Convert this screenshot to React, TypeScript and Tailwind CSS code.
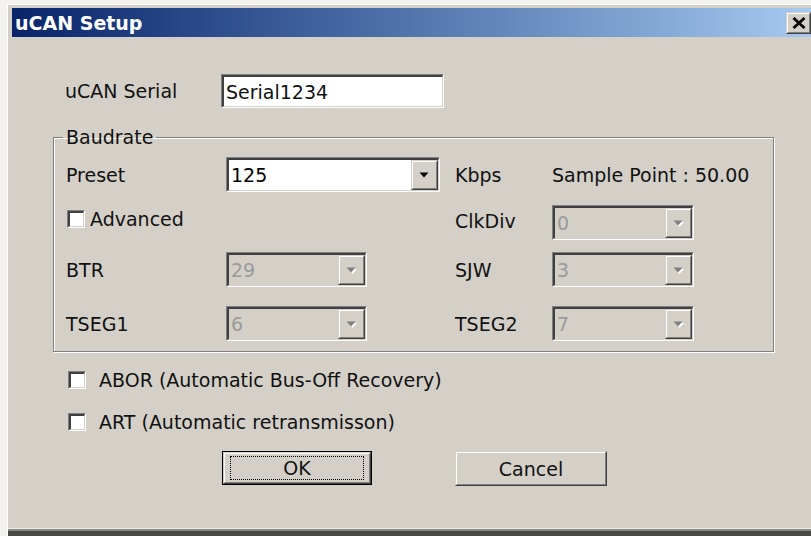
import type { ReactNode } from 'react';

const face = 'bg-[#d4d0c8]';

// classic 3D bevels
function Sunken({ className = '', children }: { className?: string; children?: ReactNode }) {
  return (
    <div className={`border border-t-[#808080] border-l-[#808080] border-b-white border-r-white ${className}`}>
      <div className="flex h-full w-full border border-t-2 border-l-2 border-t-[#404040] border-l-[#404040] border-b-[#d4d0c8] border-r-[#d4d0c8]">
        {children}
      </div>
    </div>
  );
}

function Raised({ className = '', children }: { className?: string; children?: ReactNode }) {
  return (
    <div className={`border border-t-[#d4d0c8] border-l-[#d4d0c8] border-b-[#404040] border-r-[#404040] ${face} ${className}`}>
      <div className="flex h-full w-full items-center justify-center border border-t-white border-l-white border-b-[#808080] border-r-[#808080]">
        {children}
      </div>
    </div>
  );
}

function Arrow({ disabled }: { disabled?: boolean }) {
  return (
    <svg width="11" height="7" viewBox="0 0 11 7">
      {disabled && <path d="M2 2h9L6.5 7z" fill="#fff" />}
      <path d="M0.5 0.5h9L5 5.5z" fill={disabled ? '#808080' : '#000'} />
    </svg>
  );
}

function Combo({ value, width, disabled }: { value: string; width: string; disabled?: boolean }) {
  return (
    <Sunken className={`h-[35px] ${width}`}>
      <div
        className={`flex flex-1 items-center pl-[2px] ${disabled ? 'bg-[#d4d0c8] text-[#9a9a9a]' : 'bg-white text-black'}`}
      >
        {value}
      </div>
      <Raised className="h-full w-[27px]">
        <Arrow disabled={disabled} />
      </Raised>
    </Sunken>
  );
}

function Check() {
  return (
    <Sunken className="h-[18px] w-[18px] shrink-0">
      <div className="flex-1 bg-white" />
    </Sunken>
  );
}

function Button({ label, isDefault }: { label: string; isDefault?: boolean }) {
  if (isDefault) {
    return (
      <div className="h-[34px] w-[150px] border border-black">
        <Raised className="h-full w-full">
          <div className="flex h-[24px] w-[134px] items-center justify-center border border-dotted border-black">
            {label}
          </div>
        </Raised>
      </div>
    );
  }
  return <Raised className="h-[35px] w-[152px]">{label}</Raised>;
}

export default function App() {
  return (
    <div className="h-[536px] w-[811px] overflow-hidden bg-[#f3f2ee] font-['DejaVu_Sans',sans-serif] text-[19px] leading-[22px] text-[#111]">
      <div className={`ml-[7px] mt-[4px] flex h-[532px] w-[830px] flex-col border-l border-t border-white ${face}`}>
        {/* Title bar */}
        <div className="ml-[4px] mt-[3px] flex h-[29px] w-[800px] items-center bg-gradient-to-r from-[#0a246a] to-[#a6caf0] pl-[3px]">
          <span className="text-[19px] font-bold text-white">uCAN Setup</span>
          <Raised className="ml-auto mr-[1px] h-[22px] w-[25px]">
            <svg width="14" height="12" viewBox="0 0 14 12">
              <path d="M1.5 1l11 10M12.5 1l-11 10" stroke="#000" strokeWidth="2.8" />
            </svg>
          </Raised>
        </div>

        {/* Body */}
        <div className="flex flex-1 flex-col pl-[45px]">
          <div className="ml-[12px] mt-[37px] flex h-[34px] items-center">
            <span className="w-[156px]">uCAN Serial</span>
            <Sunken className="h-[34px] w-[223px]">
              <div className="flex flex-1 items-center bg-white pl-[2px]">Serial1234</div>
            </Sunken>
          </div>

          <fieldset className="mt-[18px] w-[721px] border border-[#808080] p-0 shadow-[inset_1px_1px_0_#fff,1px_1px_0_#fff]">
            <legend className="ml-[9px] px-[3px]">Baudrate</legend>
            <div className="flex flex-col pb-[10px] pl-[12px]">
              <div className="mt-[9px] grid h-[35px] grid-cols-[160px_229px_97px_142px] items-center">
                <span>Preset</span>
                <Combo value="125" width="w-[214px]" />
                <span>Kbps</span>
                <span className="whitespace-nowrap">Sample Point : 50.00</span>
              </div>
              <div className="mt-[13px] grid h-[35px] grid-cols-[160px_229px_97px_142px] items-center">
                <div className="mb-[8px] ml-[1px] flex items-center gap-[5px]">
                  <Check />
                  <span>Advanced</span>
                </div>
                <span />
                <span className="mb-[4px]">ClkDiv</span>
                <Combo value="0" width="w-[142px]" disabled />
              </div>
              <div className="mt-[12px] grid h-[35px] grid-cols-[160px_229px_97px_142px] items-center">
                <span>BTR</span>
                <Combo value="29" width="w-[141px]" disabled />
                <span>SJW</span>
                <Combo value="3" width="w-[142px]" disabled />
              </div>
              <div className="mt-[19px] grid h-[35px] grid-cols-[160px_229px_97px_142px] items-center">
                <span>TSEG1</span>
                <Combo value="6" width="w-[141px]" disabled />
                <span>TSEG2</span>
                <Combo value="7" width="w-[142px]" disabled />
              </div>
            </div>
          </fieldset>

          <div className="ml-[15px] mt-[17px] flex h-[22px] items-center gap-[13px]">
            <Check />
            <span>ABOR (Automatic Bus-Off Recovery)</span>
          </div>
          <div className="ml-[15px] mt-[20px] flex h-[22px] items-center gap-[13px]">
            <Check />
            <span>ART (Automatic retransmisson)</span>
          </div>

          <div className="ml-[169px] mt-[18px] flex items-start gap-[83px]">
            <Button label="OK" isDefault />
            <Button label="Cancel" />
          </div>
        </div>

        {/* bottom window edge */}
        <div className="h-[1px] bg-[#ecebe7]" />
        <div className="h-[2px] bg-[#8a8883]" />
        <div className="h-[5px] bg-[#4a4a48]" />
      </div>
    </div>
  );
}
